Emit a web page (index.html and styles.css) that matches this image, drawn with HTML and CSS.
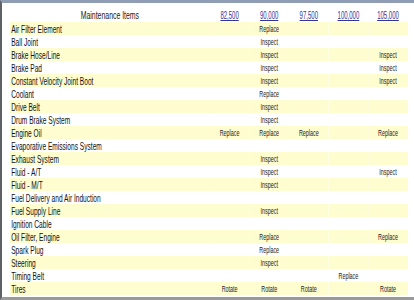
FILE: index.html
```html
<!DOCTYPE html>
<html>
<head>
<meta charset="utf-8">
<link rel="stylesheet" href="styles.css">
</head>
<body>
<div class="frame">
  <table class="sched">
    <colgroup>
      <col class="c-item"><col class="c-int"><col class="c-int"><col class="c-int"><col class="c-int"><col class="c-int">
    </colgroup>
    <thead>
      <tr>
        <th class="item-h">Maintenance Items</th>
        <th><a href="#">82,500</a></th>
        <th><a href="#">90,000</a></th>
        <th><a href="#">97,500</a></th>
        <th><a href="#">100,000</a></th>
        <th><a href="#">105,000</a></th>
      </tr>
    </thead>
    <tbody>
      <tr><td>Air Filter Element</td><td></td><td>Replace</td><td></td><td></td><td></td></tr>
      <tr><td>Ball Joint</td><td></td><td>Inspect</td><td></td><td></td><td></td></tr>
      <tr><td>Brake Hose/Line</td><td></td><td>Inspect</td><td></td><td></td><td>Inspect</td></tr>
      <tr><td>Brake Pad</td><td></td><td>Inspect</td><td></td><td></td><td>Inspect</td></tr>
      <tr><td>Constant Velocity Joint Boot</td><td></td><td>Inspect</td><td></td><td></td><td>Inspect</td></tr>
      <tr><td>Coolant</td><td></td><td>Replace</td><td></td><td></td><td></td></tr>
      <tr><td>Drive Belt</td><td></td><td>Inspect</td><td></td><td></td><td></td></tr>
      <tr><td>Drum Brake System</td><td></td><td>Inspect</td><td></td><td></td><td></td></tr>
      <tr><td>Engine Oil</td><td>Replace</td><td>Replace</td><td>Replace</td><td></td><td>Replace</td></tr>
      <tr><td>Evaporative Emissions System</td><td></td><td></td><td></td><td></td><td></td></tr>
      <tr><td>Exhaust System</td><td></td><td>Inspect</td><td></td><td></td><td></td></tr>
      <tr><td>Fluid - A/T</td><td></td><td>Inspect</td><td></td><td></td><td>Inspect</td></tr>
      <tr><td>Fluid - M/T</td><td></td><td>Inspect</td><td></td><td></td><td></td></tr>
      <tr><td>Fuel Delivery and Air Induction</td><td></td><td></td><td></td><td></td><td></td></tr>
      <tr><td>Fuel Supply Line</td><td></td><td>Inspect</td><td></td><td></td><td></td></tr>
      <tr><td>Ignition Cable</td><td></td><td></td><td></td><td></td><td></td></tr>
      <tr><td>Oil Filter, Engine</td><td></td><td>Replace</td><td></td><td></td><td>Replace</td></tr>
      <tr><td>Spark Plug</td><td></td><td>Replace</td><td></td><td></td><td></td></tr>
      <tr><td>Steering</td><td></td><td>Inspect</td><td></td><td></td><td></td></tr>
      <tr><td>Timing Belt</td><td></td><td></td><td></td><td>Replace</td><td></td></tr>
      <tr><td>Tires</td><td>Rotate</td><td>Rotate</td><td>Rotate</td><td></td><td>Rotate</td></tr>
    </tbody>
  </table>
</div>
</body>
</html>
```

FILE: styles.css
```css
html, body {
  margin: 0;
  padding: 0;
  background: #ffffff;
  overflow: hidden;
}

.frame {
  box-sizing: border-box;
  width: 414px;
  height: 300px;
  border-top: 3px solid #8e9db3;
  border-left: 2px solid #5e6166;
  border-bottom: 3px solid #9a9a9a;
  padding: 6px 0 2px 8px;
  background: #ffffff;
  overflow: hidden;
}

.sched {
  width: 663px;
  table-layout: fixed;
  border-collapse: collapse;
  border-spacing: 0;
  transform: scaleX(0.6);
  transform-origin: 0 0;
  font-family: "Liberation Sans", Arial, sans-serif;
  color: #1a1a1a;
}

.c-item { width: 333px; }
.c-int { width: 66px; }

.sched th,
.sched td {
  height: 13px;
  padding: 0;
  box-sizing: border-box;
  white-space: nowrap;
  overflow: hidden;
  font-weight: normal;
  vertical-align: middle;
}

.sched th {
  font-size: 10px;
  line-height: 13px;
  text-align: center;
}

.sched th.item-h {
  font-size: 11.5px;
  color: #1a1a1a;
}

.sched th a {
  color: #33339a;
  text-decoration: underline;
}

.sched td {
  font-size: 9px;
  line-height: 12px;
  padding-top: 1px;
  text-align: center;
  color: #222222;
}

.sched td:first-child {
  font-size: 11px;
  text-align: left;
  padding-left: 2px;
  color: #111111;
}

.sched tbody tr:nth-child(odd) {
  background: #fefdd0;
}
```
